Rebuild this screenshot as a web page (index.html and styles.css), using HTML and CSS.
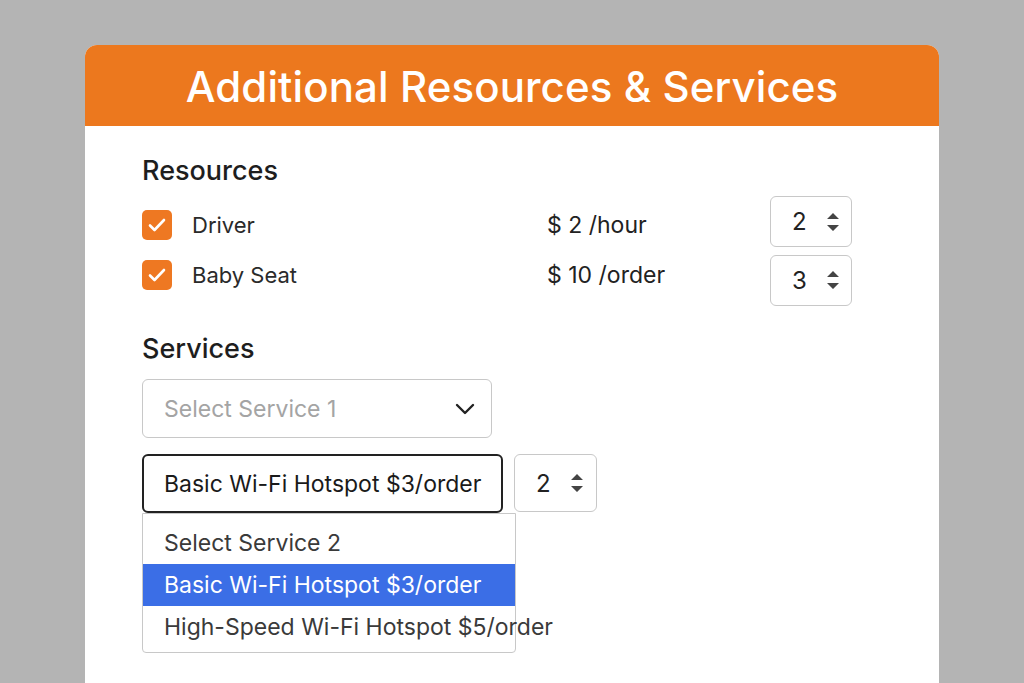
FILE: index.html
```html
<!DOCTYPE html>
<html lang="en">
<head>
  <meta charset="UTF-8" />
  <title>Additional Resources &amp; Services</title>
  <link rel="stylesheet" href="styles.css">
</head>
<body>
  <div class="card">
    <div class="card-head">Additional Resources &amp; Services</div>
    <div class="card-body">
      <h3>Resources</h3>
      <div class="res-row">
        <span class="check"><svg viewBox="0 0 30 30" width="30" height="30"><path d="M8 15.5l4.5 4.5 9.5-10" fill="none" stroke="#fff" stroke-width="2.6" stroke-linecap="round" stroke-linejoin="round"/></svg></span>
        <span class="res-name">Driver</span>
        <span class="res-price">$ 2 /hour</span>
        <div class="num up"><span>2</span><svg class="spin" viewBox="0 0 14 26" width="14" height="26"><path d="M1 10l6-6 6 6z M1 16l6 6 6-6z" fill="#444"/></svg></div>
      </div>
      <div class="res-row">
        <span class="check"><svg viewBox="0 0 30 30" width="30" height="30"><path d="M8 15.5l4.5 4.5 9.5-10" fill="none" stroke="#fff" stroke-width="2.6" stroke-linecap="round" stroke-linejoin="round"/></svg></span>
        <span class="res-name">Baby Seat</span>
        <span class="res-price">$ 10 /order</span>
        <div class="num down"><span>3</span><svg class="spin" viewBox="0 0 14 26" width="14" height="26"><path d="M1 10l6-6 6 6z M1 16l6 6 6-6z" fill="#444"/></svg></div>
      </div>

      <h3 class="services">Services</h3>
      <div class="select placeholder">
        <span>Select Service 1</span>
        <svg viewBox="0 0 24 24" width="24" height="24"><path d="M4 8l8 8 8-8" fill="none" stroke="#222" stroke-width="2.4" stroke-linecap="round" stroke-linejoin="round"/></svg>
      </div>
      <div class="svc-row">
        <div class="select open">
          <span>Basic Wi-Fi Hotspot $3/order</span>
          <ul class="options">
            <li>Select Service 2</li>
            <li class="active">Basic Wi-Fi Hotspot $3/order</li>
            <li>High-Speed Wi-Fi Hotspot $5/order</li>
          </ul>
        </div>
        <div class="num tall"><span>2</span><svg class="spin" viewBox="0 0 14 26" width="14" height="26"><path d="M1 10l6-6 6 6z M1 16l6 6 6-6z" fill="#444"/></svg></div>
      </div>
    </div>
  </div>
</body>
</html>
```

FILE: styles.css
```css
body {
  margin: 0;
  background: #b4b4b4;
  font-family: 'Inter', 'Noto Sans', sans-serif;
  color: #222;
  height: 683px;
  overflow: hidden;
}
.card {
  margin: 45px 85px 0 85px;
  background: #fff;
  border-radius: 12px 12px 0 0;
  height: 700px;
}
.card-head {
  background: #ec781e;
  color: #fff;
  border-radius: 12px 12px 0 0;
  height: 81px;
  display: flex;
  align-items: center;
  justify-content: center;
  padding-top: 2px;
  box-sizing: border-box;
  font-size: 42px;
  font-weight: 500;
  letter-spacing: 0.1px;
}
.card-body {
  padding: 28px 57px 0 57px;
}
h3 {
  margin: 0 0 13px 0;
  font-size: 27px;
  font-weight: 500;
  color: #1e1e1e;
}
.res-row {
  display: flex;
  align-items: center;
  height: 50px;
}
.check {
  width: 30px;
  height: 30px;
  border-radius: 5px;
  background: #ee7822;
  display: flex;
}
.res-name {
  width: 355px;
  margin-left: 20px;
  font-size: 22px;
  color: #2a2a2a;
}
.res-price {
  width: 223px;
  font-size: 23px;
  color: #222;
}
.num {
  width: 82px;
  height: 51px;
  box-sizing: border-box;
  border: 1px solid #c8c8c8;
  border-radius: 6px;
  display: flex;
  align-items: center;
  padding-left: 21px;
  font-size: 24px;
  gap: 19px;
}
.num.up {
  margin-top: -7px;
}
.num.down {
  margin-top: 10px;
}
.num.tall {
  height: 58px;
  width: 83px;
}
.services {
  margin-top: 32px;
  margin-bottom: 14px;
}
.select {
  width: 350px;
  height: 59px;
  box-sizing: border-box;
  border: 1px solid #c8c8c8;
  border-radius: 6px;
  display: flex;
  align-items: center;
  justify-content: space-between;
  padding: 0 14px 0 21px;
  font-size: 23px;
}
.select.placeholder {
  color: #a4a4a4;
}
.svc-row {
  display: flex;
  gap: 11px;
  margin-top: 16px;
}
.select.open {
  width: 361px;
  border: 2px solid #222;
  position: relative;
  color: #1a1a1a;
  padding-left: 20px;
}
.options {
  position: absolute;
  left: -2px;
  top: 57px;
  width: 374px;
  margin: 0;
  padding: 8px 0 0 0;
  list-style: none;
  background: #fff;
  border: 1px solid #c8c8c8;
  border-radius: 0 0 4px 4px;
  height: 140px;
  box-sizing: border-box;
  font-size: 23px;
  color: #3a3a3a;
}
.options li {
  height: 42px;
  line-height: 42px;
  padding-left: 21px;
  white-space: nowrap;
}
.options li.active {
  background: #3b6ee6;
  color: #fff;
}
```
